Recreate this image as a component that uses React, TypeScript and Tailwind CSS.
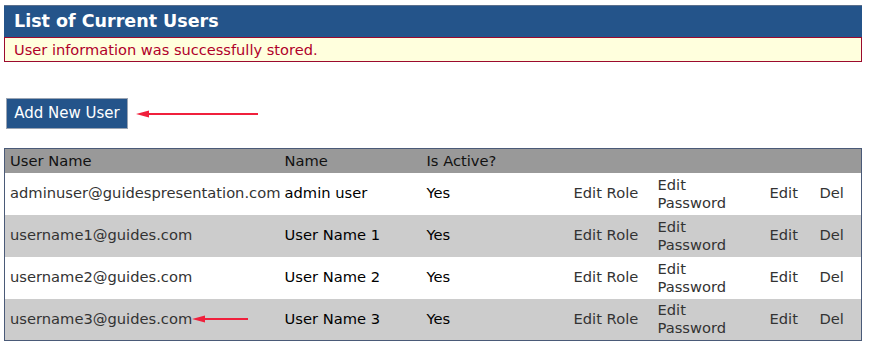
import React from 'react';

const users = [
  { login: 'adminuser@guidespresentation.com', name: 'admin user', active: 'Yes' },
  { login: 'username1@guides.com', name: 'User Name 1', active: 'Yes' },
  { login: 'username2@guides.com', name: 'User Name 2', active: 'Yes' },
  { login: 'username3@guides.com', name: 'User Name 3', active: 'Yes', arrow: true },
];

const Arrow: React.FC<{ width: number }> = ({ width }) => (
  <svg width={width} height="10" viewBox={`0 0 ${width} 10`} className="block">
    <line x1="8" y1="5" x2={width} y2="5" stroke="#f0203c" strokeWidth="2" />
    <polygon points="0,5 13,1.5 13,8.5" fill="#f0203c" />
  </svg>
);

export default function App() {
  return (
    <div className="w-[870px] h-[356px] bg-white pl-1 pr-2 pt-[5px] font-['DejaVu_Sans',Verdana,sans-serif] text-[14.7px]">
      <div className="h-[32px] bg-[#24548a] border-t border-[#5a6f8c] pl-[10px] flex items-center">
        <h1 className="text-white font-bold text-[17.5px]">List of Current Users</h1>
      </div>
      <div className="h-[25px] bg-[#ffffdd] border border-[#9b0a2e] pl-[9px] flex items-center text-[14.6px] text-[#b0002a]">
        User information was successfully stored.
      </div>

      <div className="mt-[36px] flex items-center ml-[2px]">
        <button className="h-[31px] w-[122px] bg-[#24548a] border border-[#9aa4b3] text-white text-[15px]">
          Add New User
        </button>
        <div className="ml-[8px]">
          <Arrow width={122} />
        </div>
      </div>

      <table className="mt-[19px] w-[858px] table-fixed border border-[#4a5a78] border-collapse">
        <colgroup>
          <col className="w-[275px]" />
          <col className="w-[142px]" />
          <col className="w-[147px]" />
          <col className="w-[84px]" />
          <col className="w-[112px]" />
          <col className="w-[50px]" />
          <col />
        </colgroup>
        <thead>
          <tr className="h-[24px] bg-[#999999] text-left">
            <th className="font-normal pl-[5px] text-[#111]">User Name</th>
            <th className="font-normal pl-[5px] text-[#111]">Name</th>
            <th className="font-normal pl-[5px] text-[#111]" colSpan={5}>Is Active?</th>
          </tr>
        </thead>
        <tbody>
          {users.map((u, i) => (
            <tr key={u.login} className={`h-[42px] ${i % 2 ? 'bg-[#cccccc]' : 'bg-white'}`}>
              <td className="pl-[5px] text-[#333]">
                <div className="flex items-center">
                  <span>{u.login}</span>
                  {u.arrow && <Arrow width={56} />}
                </div>
              </td>
              <td className="pl-[5px] text-black">{u.name}</td>
              <td className="pl-[5px] text-black">{u.active}</td>
              <td className="pl-[5px] text-[#333]">Edit Role</td>
              <td className="pl-[5px] text-[#333] leading-[18px]">
                Edit
                <br />
                Password
              </td>
              <td className="pl-[5px] text-[#333]">Edit</td>
              <td className="pl-[5px] text-[#333]">Del</td>
            </tr>
          ))}
        </tbody>
      </table>
    </div>
  );
}
